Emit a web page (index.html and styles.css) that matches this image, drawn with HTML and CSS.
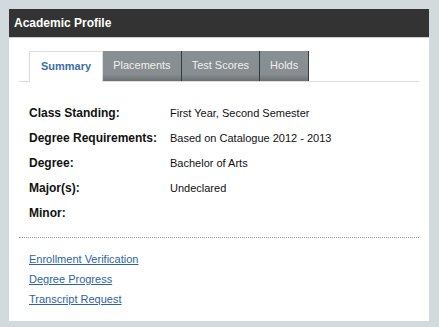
FILE: index.html
```html
<!DOCTYPE html>
<html lang="en">
<head>
    <meta charset="UTF-8">
    <meta name="viewport" content="width=device-width, initial-scale=1.0">
    <title>Academic Profile</title>
    <link rel="stylesheet" href="styles.css">
</head>
<body>
    <div class="panel">
        <div class="panel-header">Academic Profile</div>

        <div class="panel-body">
            <ul class="tabs">
                <li class="tab active">Summary</li>
                <li class="tab">Placements</li>
                <li class="tab">Test Scores</li>
                <li class="tab">Holds</li>
            </ul>

            <dl class="details">
                <dt>Class Standing:</dt>
                <dd>First Year, Second Semester</dd>
                <dt>Degree Requirements:</dt>
                <dd>Based on Catalogue 2012 - 2013</dd>
                <dt>Degree:</dt>
                <dd>Bachelor of Arts</dd>
                <dt>Major(s):</dt>
                <dd>Undeclared</dd>
                <dt>Minor:</dt>
                <dd></dd>
            </dl>

            <div class="links">
                <a href="#">Enrollment Verification</a>
                <a href="#">Degree Progress</a>
                <a href="#">Transcript Request</a>
            </div>
        </div>
    </div>
</body>
</html>
```

FILE: styles.css
```css
body {
    margin: 0;
    padding: 9px;
    background-color: #d3dadd;
    font-family: "Liberation Sans", Arial, sans-serif;
    color: #111;
}

.panel {
    width: 420px;
    height: 312px;
    background: white;
}

.panel-header {
    height: 28px;
    line-height: 28px;
    padding-left: 5px;
    background: #333;
    color: white;
    font-size: 12px;
    font-weight: bold;
    border-bottom: 1px solid #c9ced0;
}

.panel-body {
    padding: 13px 10px 0;
}

.tabs {
    display: flex;
    margin: 0;
    padding: 0 0 0 10px;
    list-style: none;
    border-bottom: 1px solid #ddd;
}

.tab {
    height: 30px;
    line-height: 29px;
    padding: 0 10px;
    font-size: 11px;
    color: #f0f0f0;
    background: linear-gradient(to bottom, #899094 0%, #878d90 78%, #6a6f72 100%);
    border-right: 1px solid #2e3c46;
}

.tab.active {
    padding: 0 11px;
    margin-bottom: -1px;
    height: 31px;
    background: white;
    color: #3b6ea7;
    font-weight: bold;
    border: 1px solid #ddd;
    border-bottom: none;
    box-sizing: border-box;
    line-height: 29px;
}

.details {
    display: grid;
    grid-template-columns: 141px 1fr;
    grid-auto-rows: 25px;
    align-items: center;
    margin: 18px 0 0 10px;
    font-size: 11px;
}

.details dt {
    font-size: 12px;
    font-weight: bold;
}

.details dd {
    margin: 0;
}

.links {
    margin-top: 12px;
    padding: 11px 0 0 10px;
    border-top: 1px dotted #999;
    display: flex;
    flex-direction: column;
}

.links a {
    line-height: 20px;
    font-size: 11px;
    color: #2c64a6;
    width: max-content;
}
```
